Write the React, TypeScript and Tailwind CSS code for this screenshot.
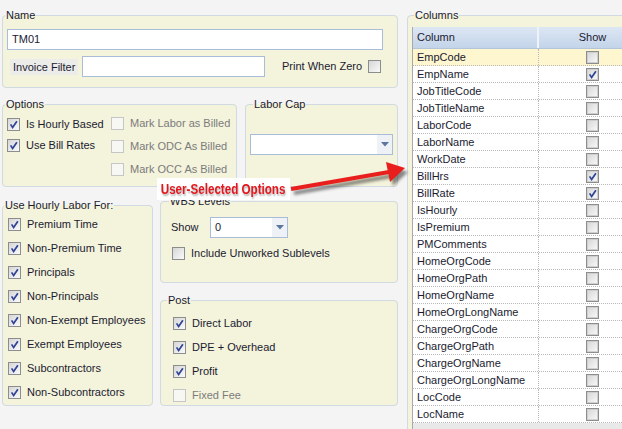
import React from 'react';

type CheckProps = { checked?: boolean; disabled?: boolean; className?: string };

function Check({ checked = false, disabled = false, className = '' }: CheckProps) {
  return (
    <span
      className={`relative inline-block w-[13px] h-[13px] shrink-0 border ${
        disabled
          ? 'border-[#c6c6c6] bg-[#f7f7f4]'
          : 'border-[#8c8d8d] bg-linear-to-br from-[#d6d6d6] to-[#fafafa]'
      } ${className}`}
    >
      {checked && (
        <svg className="absolute left-0 top-0" width="11" height="11" viewBox="0 0 11 11">
          <path d="M2.6 5.4 L4.6 8.4 L8.9 2.2" fill="none" stroke="#2f4396" strokeWidth="1.7" />
        </svg>
      )}
    </span>
  );
}

function Opt({ label, checked, disabled }: { label: string; checked?: boolean; disabled?: boolean }) {
  return (
    <div className="flex items-center h-[13px]">
      <Check checked={checked} disabled={disabled} />
      <span className={`ml-[6px] whitespace-nowrap ${disabled ? 'text-[#7b7b7b]' : ''}`}>{label}</span>
    </div>
  );
}

function Group({
  title,
  className = '',
  legendClass = '',
  children,
}: {
  title: string;
  className?: string;
  legendClass?: string;
  children?: React.ReactNode;
}) {
  return (
    <fieldset className={`shrink-0 border border-[#d1d9e2] rounded-[4px] bg-[#f4f3dc] ${className}`}>
      <legend className={`leading-[14px] px-[1px] ${legendClass}`}>{title}</legend>
      {children}
    </fieldset>
  );
}

function Select({ value, className = '' }: { value: string; className?: string }) {
  return (
    <div className={`flex h-[21px] border border-[#a9bdd8] bg-white ${className}`}>
      <div className="flex-1 pl-[4px] flex items-center">{value}</div>
      <div className="w-[15px] bg-[#eef1f6] flex items-center justify-center">
        <svg width="8" height="5" viewBox="0 0 8 5">
          <path d="M0 0 H8 L4 4.5 Z" fill="#5a779f" />
        </svg>
      </div>
    </div>
  );
}

const columns: [string, boolean][] = [
  ['EmpCode', false],
  ['EmpName', true],
  ['JobTitleCode', false],
  ['JobTitleName', false],
  ['LaborCode', false],
  ['LaborName', false],
  ['WorkDate', false],
  ['BillHrs', true],
  ['BillRate', true],
  ['IsHourly', false],
  ['IsPremium', false],
  ['PMComments', false],
  ['HomeOrgCode', false],
  ['HomeOrgPath', false],
  ['HomeOrgName', false],
  ['HomeOrgLongName', false],
  ['ChargeOrgCode', false],
  ['ChargeOrgPath', false],
  ['ChargeOrgName', false],
  ['ChargeOrgLongName', false],
  ['LocCode', false],
  ['LocName', false],
];

export default function App() {
  return (
    <div className="relative flex w-[622px] h-[429px] overflow-hidden bg-[#f4f4f4] text-[11px] text-[#1b1b30] font-['Liberation_Sans',Arial,sans-serif]">
      {/* left side */}
      <div className="w-[407px] shrink-0 pl-[2px] pt-[8px] flex flex-col">
        <Group title="Name" className="w-[396px] h-[80px]" legendClass="ml-[2px]">
          <div className="ml-[4px] mt-[7px] w-[376px] h-[21px] border border-[#a9bdd8] bg-white pl-[4px] flex items-center">
            TM01
          </div>
          <div className="flex items-center mt-[6px] h-[21px]">
            <span className="ml-[7px] w-[68px] h-[16px] bg-[#ececea] pl-[3px] leading-[16px]">Invoice Filter</span>
            <div className="ml-[4px] w-[183px] h-[21px] border border-[#a9bdd8] bg-white" />
            <span className="ml-[17px] w-[86px] whitespace-nowrap">Print When Zero</span>
            <Check />
          </div>
        </Group>

        <div className="flex items-start mt-[9px]">
          <Group title="Options" className="w-[235px] h-[90px]" legendClass="ml-[2px]">
            <div className="flex">
              <div className="ml-[4px] w-[104px] mt-[7px] flex flex-col gap-[8px]">
                <Opt label="Is Hourly Based" checked />
                <Opt label="Use Bill Rates" checked />
              </div>
              <div className="mt-[6px] flex flex-col gap-[10px]">
                <Opt label="Mark Labor as Billed" disabled />
                <Opt label="Mark ODC As Billed" disabled />
                <Opt label="Mark OCC As Billed" disabled />
              </div>
            </div>
          </Group>
          <Group title="Labor Cap" className="ml-[8px] w-[153px] h-[90px]" legendClass="ml-[7px]">
            <Select value="" className="ml-[4px] mt-[23px] w-[143px]" />
          </Group>
        </div>

        <div className="flex items-start">
          <Group title="Use Hourly Labor For:" className="mt-[11px] w-[151px] h-[208px]" legendClass="ml-[1px]">
            <div className="ml-[5px] mt-[6px] flex flex-col gap-[11px]">
              <Opt label="Premium Time" checked />
              <Opt label="Non-Premium Time" checked />
              <Opt label="Principals" checked />
              <Opt label="Non-Principals" checked />
              <Opt label="Non-Exempt Employees" checked />
              <Opt label="Exempt Employees" checked />
              <Opt label="Subcontractors" checked />
              <Opt label="Non-Subcontractors" checked />
            </div>
          </Group>

          <div className="ml-[7px] mt-[7px] flex flex-col">
            <Group title="WBS Levels" className="w-[238px] h-[89px]" legendClass="ml-[8px]">
              <div className="flex items-center mt-[9px]">
                <span className="ml-[10px] w-[39px]">Show</span>
                <Select value="0" className="w-[78px]" />
              </div>
              <div className="ml-[11px] mt-[9px]">
                <Opt label="Include Unworked Sublevels" />
              </div>
            </Group>
            <Group title="Post" className="mt-[10px] w-[238px] h-[113px]" legendClass="ml-[6px]">
              <div className="ml-[12px] mt-[10px] flex flex-col gap-[11px]">
                <Opt label="Direct Labor" checked />
                <Opt label="DPE + Overhead" checked />
                <Opt label="Profit" checked />
                <Opt label="Fixed Fee" disabled />
              </div>
            </Group>
          </div>
        </div>
      </div>

      {/* right side */}
      <div className="pt-[8px]">
        <Group title="Columns" className="w-[250px] h-[440px]" legendClass="ml-[6px]">
          <div className="ml-[4px] mt-[5px] w-[236px] h-[420px] bg-[#e9e9e9] border-l border-[#a9a9a9]">
            <div className="flex h-[22px] bg-linear-to-b from-[#dde7f4] to-[#c3d4ea] border-b border-[#b4c4da]">
              <div className="w-[126px] pl-[4px] flex items-center border-r-2 border-[#eef3fa]">Column</div>
              <div className="flex-1 flex items-center justify-center pr-[2px]">Show</div>
            </div>
            {columns.map(([name, on], i) => (
              <div
                key={name}
                className={`flex h-[17px] border-b border-dotted border-[#b9b9b9] ${i === 0 ? 'bg-[#fdf6cf]' : 'bg-white'}`}
              >
                <div className="w-[126px] pl-[4px] flex items-center border-r border-dotted border-[#b9b9b9] whitespace-nowrap">
                  {name}
                </div>
                <div className="flex-1 flex items-center justify-center pr-[2px]">
                  <Check checked={on} className="shadow-[inset_0_0_0_1px_#cfcfcf]" />
                </div>
              </div>
            ))}
          </div>
        </Group>
      </div>

      {/* annotation overlay */}
      <svg className="absolute left-0 top-0 pointer-events-none" width="622" height="429" viewBox="0 0 622 429">
        <defs>
          <filter id="sh" x="-20%" y="-50%" width="140%" height="200%">
            <feGaussianBlur stdDeviation="1.6" />
          </filter>
        </defs>
        <g filter="url(#sh)" fill="rgba(0,0,0,0.45)" stroke="rgba(0,0,0,0.45)" transform="translate(3 4)">
          <line x1="291" y1="189" x2="389" y2="172" strokeWidth="4" />
          <polygon points="386,162 405,168 390,182" stroke="none" />
        </g>
        <line x1="291" y1="189" x2="389" y2="172" stroke="#e81f1c" strokeWidth="4" />
        <polygon points="386,162 405,168 390,182" fill="#e81f1c" />
      </svg>
      <div className="absolute left-[157px] top-[178px] w-[133px] h-[22px] bg-white flex items-center justify-center">
        <span className="shrink-0 scale-x-[0.83] text-[14px] font-bold text-[#e3161d] whitespace-nowrap [text-shadow:1px_2px_2px_rgba(0,0,0,0.3)]">
          User-Selected Options
        </span>
      </div>
    </div>
  );
}
